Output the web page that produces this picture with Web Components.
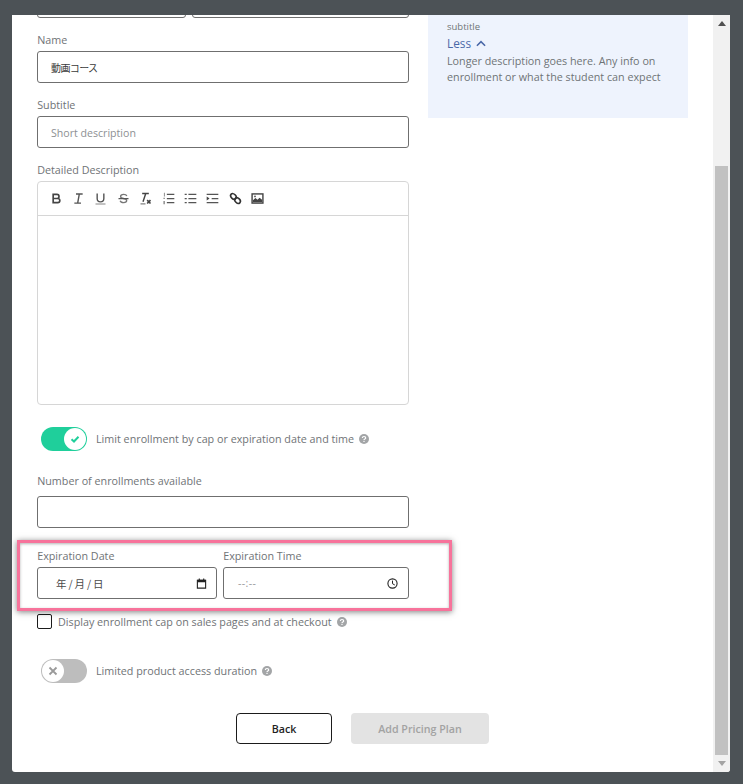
<!DOCTYPE html>
<html lang="en">

<head>
    <meta charset="UTF-8">
    <title>Add Pricing Plan</title>
    <style>
        html, body {
            margin: 0;
            height: 100%;
            background: #4c5256;
        }

        body {
            font-family: "Open Sans", "Noto Sans CJK JP", sans-serif;
            color: #6f7376;
            overflow: hidden;
        }
    </style>
</head>

<body>
    <plan-modal>
        <plan-form>
            <form-field label="Name"><text-box value="動画コース"></text-box></form-field>
            <form-field label="Subtitle"><text-box placeholder="Short description"></text-box></form-field>
            <form-field label="Detailed Description" after="22"><rich-editor></rich-editor></form-field>

            <toggle-row on label="Limit enrollment by cap or expiration date and time"></toggle-row>

            <form-field label="Number of enrollments available" gap="7" after="20"><text-box></text-box></form-field>

            <highlight-box>
                <form-field label="Expiration Date" after="0" style="width:180px"><text-box kind="date"></text-box></form-field>
                <form-field label="Expiration Time" after="0" style="flex:1"><text-box kind="time"></text-box></form-field>
            </highlight-box>

            <check-row label="Display enrollment cap on sales pages and at checkout"></check-row>

            <toggle-row label="Limited product access duration"></toggle-row>
        </plan-form>
    </plan-modal>

    <script>
        const helpIcon = `<svg width="10" height="10" viewBox="0 0 10 10"><circle cx="5" cy="5" r="5" fill="#a3a5a7"/><path d="M3.300 4C3.400 3 4.100 2.500 5 2.500S6.700 3.100 6.700 3.900C6.700 5 5 5 5 6.100" fill="none" stroke="#fff" stroke-width="1.200"/><rect x="4.400" y="6.800" width="1.200" height="1.200" fill="#fff"/></svg>`;

        class PlanModal extends HTMLElement {
            constructor() {
                super();
                this.attachShadow({ mode: 'open' });
                this.shadowRoot.innerHTML = `
      <style>
        :host { display: flex; margin: 15px 13px 0 12px; height: 757px; background: #fff; border-radius: 0 0 3px 3px; overflow: hidden; }
        .body { flex: 1; min-width: 0; overflow: hidden; }
        .bar { width: 17px; background: #f1f1f1; display: flex; flex-direction: column; align-items: center; }
        .arrow { height: 17px; flex: none; display: flex; align-items: center; justify-content: center; }
        .track { flex: 1; width: 100%; padding: 134px 2px 0; box-sizing: border-box; display: flex; }
        .thumb { flex: 1; background: #c1c1c1; height: 589px; }
      </style>
      <div class="body"><slot></slot></div>
      <div class="bar">
        <div class="arrow"><svg width="8" height="5" viewBox="0 0 8 5"><path d="M4 0 8 5H0Z" fill="#505050"/></svg></div>
        <div class="track"><div class="thumb"></div></div>
        <div class="arrow"><svg width="8" height="5" viewBox="0 0 8 5"><path d="M0 0H8L4 5Z" fill="#a3a3a3"/></svg></div>
      </div>`;
            }
        }

        class PlanForm extends HTMLElement {
            constructor() {
                super();
                this.attachShadow({ mode: 'open' });
                this.shadowRoot.innerHTML = `
      <style>
        :host { display: block; }
        .columns { display: flex; gap: 19px; padding-left: 25px; height: 698px; }
        .left { width: 372px; flex: none; }
        .clipped { display: flex; gap: 6px; height: 3px; overflow: hidden; align-items: flex-end; margin-bottom: 14px; }
        .clipped i { display: block; height: 32px; box-sizing: border-box; border: 1px solid #6f6f6f; border-radius: 3px; flex: none; }
        .clipped i:first-child { width: 149px; }
        .clipped i:last-child { width: 217px; }
        .footer { display: flex; justify-content: center; gap: 19px; }
        button { height: 31px; box-sizing: border-box; border-radius: 4px; font: 600 10.700px "Open Sans", sans-serif; }
        .back { width: 96px; background: #fff; border: 1px solid #1b1b1b; color: #1f1f1f; }
        .add { width: 138px; background: #e3e3e3; border: 0; color: #a2a2a2; }
      </style>
      <div class="columns">
        <div class="left">
          <div class="clipped"><i></i><i></i></div>
          <slot></slot>
        </div>
        <sample-card></sample-card>
      </div>
      <div class="footer"><button class="back">Back</button><button class="add">Add Pricing Plan</button></div>`;
            }
        }

        class FormField extends HTMLElement {
            constructor() {
                super();
                this.attachShadow({ mode: 'open' });
            }

            connectedCallback() {
                const gap = this.getAttribute("gap") || 3;
                const after = this.getAttribute("after") || 14;
                this.shadowRoot.innerHTML = `
      <style>
        :host { display: block; margin-bottom: ${after}px; }
        label { display: block; font-size: 10.750px; line-height: 16px; padding-left: .2px; margin-bottom: ${gap}px; color: #6f7376; }
      </style>
      <label>${this.getAttribute("label")}</label>
      <slot></slot>`;
            }
        }

        class TextBox extends HTMLElement {
            constructor() {
                super();
                this.attachShadow({ mode: 'open' });
            }

            connectedCallback() {
                const kind = this.getAttribute("kind");
                const value = this.getAttribute("value");
                const placeholder = this.getAttribute("placeholder");
                let inner = "";
                if (value) inner = `<span class="value">${value}</span>`;
                if (placeholder) inner = `<span class="hint">${placeholder}</span>`;
                if (kind === "date") {
                    inner = `<span class="date">年 / 月 / 日</span>
          <svg width="11" height="11" viewBox="0 0 12 12"><path d="M1.500 2.500H10.500V11H1.500Z" fill="none" stroke="#222" stroke-width="1.200"/><path d="M1.500 2H10.500V4.600H1.500ZM3 .5H4.200V2H3ZM7.800 .5H9V2H7.800Z" fill="#222"/></svg>`;
                }
                if (kind === "time") {
                    inner = `<span class="time">--:--</span>
          <svg class="clock" width="11" height="11" viewBox="0 0 11 11"><circle cx="5.500" cy="5.500" r="4.600" fill="none" stroke="#222" stroke-width="1.100"/><path d="M5.500 2.600V5.700L7.800 7" fill="none" stroke="#222" stroke-width="1"/></svg>`;
                }
                this.shadowRoot.innerHTML = `
      <style>
        :host { display: flex; align-items: center; justify-content: space-between; height: 32px; box-sizing: border-box; border: 1px solid #6f6f6f; border-radius: 3px; padding: 0 9px 0 13px; background: #fff; font-size: 10.600px; }
        .value { color: #3a3a3a; font-size: 10px; letter-spacing: -.6px; font-family: "Noto Sans CJK JP", sans-serif; }
        .hint { color: #8d9093; padding-top: 1px; }
        .date { color: #4a4a4a; font-size: 10.500px; font-family: "Noto Sans CJK JP", sans-serif; padding-left: 5px; word-spacing: -.4px; }
        .time { color: #9a9a9a; padding-left: 1px; letter-spacing: .4px; }
        .clock { margin-right: 1px; }
      </style>
      ${inner}`;
            }
        }

        class RichEditor extends HTMLElement {
            constructor() {
                super();
                this.attachShadow({ mode: 'open' });
                const icons = [
                    `<path d="M5 4H9.500A2.500 2.500 0 0 1 9.500 9H5ZM5 9H10.500A2.500 2.500 0 0 1 10.500 14H5Z" fill="none" stroke="#444" stroke-width="2"/>`,
                    `<path d="M6 3.500H14M4 14.500H12M10 3.500 8 14.500" fill="none" stroke="#555" stroke-width="1.700"/>`,
                    `<path d="M5 3V9A4 4 0 0 0 13 9V3" fill="none" stroke="#555" stroke-width="1.700"/><rect x="3" y="15" width="12" height="1.200" fill="#888"/>`,
                    `<path d="M13 6C12.500 4.500 11 4 9.200 4 7 4 5.500 5 5.500 6.600 5.500 8.200 7 8.700 9 9 11 9.300 12.800 9.900 12.800 11.500 12.800 13 11.300 14 9.200 14 7 14 5.500 13.300 5 11.800" fill="none" stroke="#777" stroke-width="1.600"/><path d="M3 9H15" stroke="#555" stroke-width="1.500"/>`,
                    `<path d="M5 3H13M9.300 3 6 13" fill="none" stroke="#444" stroke-width="1.700"/><path d="M11 11 15 15M15 11 11 15" stroke="#444" stroke-width="2"/><rect x="3" y="15" width="6" height="1" fill="#444"/>`,
                    `<path d="M7 4H16M7 9H16M7 14H16" stroke="#555" stroke-width="1.500"/><path d="M3.500 2H4.500V6.500H3.500ZM3 8H4.500V9.500H3ZM3 12H4.500V16H3Z" fill="#777"/>`,
                    `<path d="M6.500 4H16M6.500 9H16M6.500 14H16" stroke="#555" stroke-width="1.500"/><path d="M2 4H4.500M2 9H4.500M2 14H4.500" stroke="#555" stroke-width="1.500"/>`,
                    `<path d="M2 4H16M8 9H16M2 14H16" stroke="#555" stroke-width="1.500"/><path d="M2 6.500 5.500 9 2 11.500Z" fill="#444"/>`,
                    `<g fill="none" stroke="#333" stroke-width="1.900"><ellipse cx="6.500" cy="6.500" rx="3.800" ry="2.800" transform="rotate(45 6.500 6.500)"/><ellipse cx="11.500" cy="11.500" rx="3.800" ry="2.800" transform="rotate(45 11.500 11.500)"/></g>`,
                    `<rect x="2.500" y="3.500" width="13" height="11" fill="none" stroke="#444" stroke-width="1.700"/><path d="M3.500 13.500V11L6.500 8.500 9 10.500 11.500 8 14.500 10.500V13.500Z" fill="#444"/><circle cx="6" cy="6.500" r="1" fill="#444"/>`
                ];
                this.shadowRoot.innerHTML = `
      <style>
        :host { display: block; height: 224px; box-sizing: border-box; border: 1px solid #d6d6d6; border-radius: 4px; }
        .toolbar { display: flex; height: 34px; box-sizing: border-box; padding: 0 7px; align-items: center; border-bottom: 1px solid #d6d6d6; }
        .toolbar span { width: 22.400px; flex: none; display: flex; justify-content: center; }
        svg { width: 15px; height: 15px; }
      </style>
      <div class="toolbar">${icons.map(i => `<span><svg viewBox="0 0 18 18">${i}</svg></span>`).join("")}</div>`;
            }
        }

        class ToggleRow extends HTMLElement {
            constructor() {
                super();
                this.attachShadow({ mode: 'open' });
            }

            connectedCallback() {
                const on = this.hasAttribute("on");
                const glyph = on
                    ? `<path d="M3.500 7.200 6 9.500 10.500 4.800" fill="none" stroke="#1fcf9b" stroke-width="2"/>`
                    : `<path d="M3.500 3.500 10.500 10.500M10.500 3.500 3.500 10.500" stroke="#9a9a9a" stroke-width="1.800"/>`;
                this.shadowRoot.innerHTML = `
      <style>
        :host { display: flex; align-items: center; height: 24px; margin: 0 0 22px 4px; font-size: 10.750px; color: #6f7376; }
        .track { width: 46px; height: 24px; border-radius: 12px; box-sizing: border-box; flex: none; margin-right: 9px; display: flex; align-items: center; padding: 1px; background: ${on ? "#1fcf9b" : "#bdbdbd"}; justify-content: ${on ? "flex-end" : "flex-start"}; }
        .knob { width: 22px; height: 22px; border-radius: 50%; background: #fff; display: flex; align-items: center; justify-content: center; }
        .text { margin-right: 5px; }
        svg { display: block; }
      </style>
      <div class="track"><div class="knob"><svg width="14" height="14" viewBox="0 0 14 14">${glyph}</svg></div></div>
      <span class="text">${this.getAttribute("label")}</span>${helpIcon}`;
            }
        }

        class CheckRow extends HTMLElement {
            constructor() {
                super();
                this.attachShadow({ mode: 'open' });
            }

            connectedCallback() {
                this.shadowRoot.innerHTML = `
      <style>
        :host { display: flex; align-items: center; height: 15px; margin-bottom: 30px; font-size: 10.750px; color: #6f7376; }
        .box { width: 15px; height: 15px; box-sizing: border-box; border: 1px solid #1b1b1b; border-radius: 2px; flex: none; margin-right: 6px; }
        .text { margin-right: 5px; }
      </style>
      <div class="box"></div>
      <span class="text">${this.getAttribute("label")}</span>${helpIcon}`;
            }
        }

        class HighlightBox extends HTMLElement {
            constructor() {
                super();
                this.attachShadow({ mode: 'open' });
                this.shadowRoot.innerHTML = `
      <style>
        :host { display: block; position: relative; margin-bottom: 15px; }
        .row { display: flex; gap: 6px; }
        .frame { position: absolute; left: -20px; top: -8px; width: 435px; height: 71px; box-sizing: border-box; border: 3px solid #f7739b; box-shadow: 0 1px 6px rgba(0,0,0,.5), inset 0 1px 3px rgba(0,0,0,.3); pointer-events: none; }
      </style>
      <div class="row"><slot></slot></div>
      <div class="frame"></div>`;
            }
        }

        class SampleCard extends HTMLElement {
            constructor() {
                super();
                this.attachShadow({ mode: 'open' });
                this.shadowRoot.innerHTML = `
      <style>
        :host { display: block; width: 260px; height: 103px; box-sizing: border-box; background: #eef3fd; padding: 4px 19px 0; font-size: 10.750px; color: #6f7376; }
        .sub { font-size: 9.500px; line-height: 15px; }
        .less { font-size: 11.800px; line-height: 19px; color: #4a68a8; display: flex; align-items: center; gap: 5px; }
        .long { line-height: 16px; white-space: nowrap; }
      </style>
      <div class="sub">subtitle</div>
      <div class="less">Less <svg width="10" height="7" viewBox="0 0 11 7"><path d="M1 6 5.500 1.500 10 6" fill="none" stroke="#4a68a8" stroke-width="1.700"/></svg></div>
      <div class="long">Longer description goes here. Any info on<br>enrollment or what the student can expect</div>`;
            }
        }

        customElements.define("plan-modal", PlanModal);
        customElements.define("plan-form", PlanForm);
        customElements.define("form-field", FormField);
        customElements.define("text-box", TextBox);
        customElements.define("rich-editor", RichEditor);
        customElements.define("toggle-row", ToggleRow);
        customElements.define("check-row", CheckRow);
        customElements.define("highlight-box", HighlightBox);
        customElements.define("sample-card", SampleCard);
    </script>
</body>

</html>
